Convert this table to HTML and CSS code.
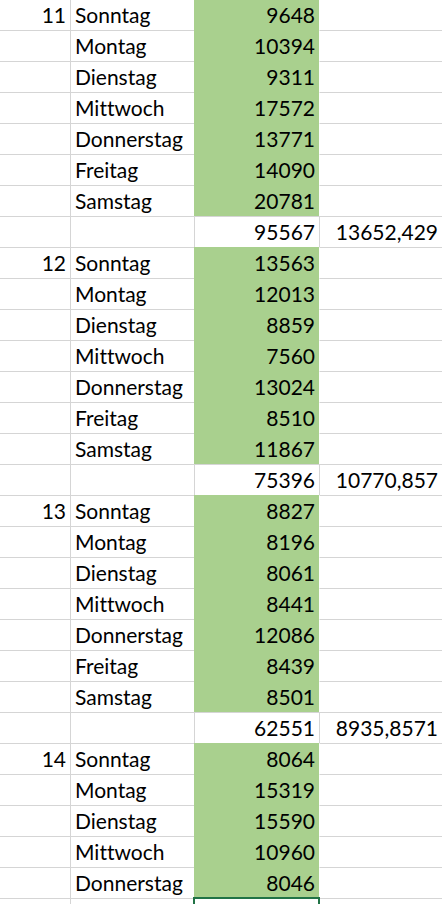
FILE: index.html
```html
<!DOCTYPE html>
<html lang="de">
<head>
<meta charset="utf-8">
<title>Tabelle</title>
<link rel="stylesheet" href="styles.css">
</head>
<body>
<div class="sheet">
  <div class="grid">
    <div class="row day"><div class="cell a">11</div><div class="cell b">Sonntag</div><div class="cell c">9648</div><div class="cell d"></div></div>
    <div class="row day"><div class="cell a"></div><div class="cell b">Montag</div><div class="cell c">10394</div><div class="cell d"></div></div>
    <div class="row day"><div class="cell a"></div><div class="cell b">Dienstag</div><div class="cell c">9311</div><div class="cell d"></div></div>
    <div class="row day"><div class="cell a"></div><div class="cell b">Mittwoch</div><div class="cell c">17572</div><div class="cell d"></div></div>
    <div class="row day"><div class="cell a"></div><div class="cell b">Donnerstag</div><div class="cell c">13771</div><div class="cell d"></div></div>
    <div class="row day"><div class="cell a"></div><div class="cell b">Freitag</div><div class="cell c">14090</div><div class="cell d"></div></div>
    <div class="row day"><div class="cell a"></div><div class="cell b">Samstag</div><div class="cell c">20781</div><div class="cell d"></div></div>
    <div class="row total"><div class="cell a"></div><div class="cell b"></div><div class="cell c">95567</div><div class="cell d">13652,429</div></div>

    <div class="row day"><div class="cell a">12</div><div class="cell b">Sonntag</div><div class="cell c">13563</div><div class="cell d"></div></div>
    <div class="row day"><div class="cell a"></div><div class="cell b">Montag</div><div class="cell c">12013</div><div class="cell d"></div></div>
    <div class="row day"><div class="cell a"></div><div class="cell b">Dienstag</div><div class="cell c">8859</div><div class="cell d"></div></div>
    <div class="row day"><div class="cell a"></div><div class="cell b">Mittwoch</div><div class="cell c">7560</div><div class="cell d"></div></div>
    <div class="row day"><div class="cell a"></div><div class="cell b">Donnerstag</div><div class="cell c">13024</div><div class="cell d"></div></div>
    <div class="row day"><div class="cell a"></div><div class="cell b">Freitag</div><div class="cell c">8510</div><div class="cell d"></div></div>
    <div class="row day"><div class="cell a"></div><div class="cell b">Samstag</div><div class="cell c">11867</div><div class="cell d"></div></div>
    <div class="row total"><div class="cell a"></div><div class="cell b"></div><div class="cell c">75396</div><div class="cell d">10770,857</div></div>

    <div class="row day"><div class="cell a">13</div><div class="cell b">Sonntag</div><div class="cell c">8827</div><div class="cell d"></div></div>
    <div class="row day"><div class="cell a"></div><div class="cell b">Montag</div><div class="cell c">8196</div><div class="cell d"></div></div>
    <div class="row day"><div class="cell a"></div><div class="cell b">Dienstag</div><div class="cell c">8061</div><div class="cell d"></div></div>
    <div class="row day"><div class="cell a"></div><div class="cell b">Mittwoch</div><div class="cell c">8441</div><div class="cell d"></div></div>
    <div class="row day"><div class="cell a"></div><div class="cell b">Donnerstag</div><div class="cell c">12086</div><div class="cell d"></div></div>
    <div class="row day"><div class="cell a"></div><div class="cell b">Freitag</div><div class="cell c">8439</div><div class="cell d"></div></div>
    <div class="row day"><div class="cell a"></div><div class="cell b">Samstag</div><div class="cell c">8501</div><div class="cell d"></div></div>
    <div class="row total"><div class="cell a"></div><div class="cell b"></div><div class="cell c">62551</div><div class="cell d">8935,8571</div></div>

    <div class="row day"><div class="cell a">14</div><div class="cell b">Sonntag</div><div class="cell c">8064</div><div class="cell d"></div></div>
    <div class="row day"><div class="cell a"></div><div class="cell b">Montag</div><div class="cell c">15319</div><div class="cell d"></div></div>
    <div class="row day"><div class="cell a"></div><div class="cell b">Dienstag</div><div class="cell c">15590</div><div class="cell d"></div></div>
    <div class="row day"><div class="cell a"></div><div class="cell b">Mittwoch</div><div class="cell c">10960</div><div class="cell d"></div></div>
    <div class="row day"><div class="cell a"></div><div class="cell b">Donnerstag</div><div class="cell c">8046</div><div class="cell d"></div></div>
    <div class="row"><div class="cell a"></div><div class="cell b"></div><div class="cell c sel"></div><div class="cell d"></div></div>
  </div>
</div>
</body>
</html>
```
FILE: styles.css
```css
html, body {
  margin: 0;
  padding: 0;
  background: #ffffff;
}

.sheet {
  height: 904px;
  overflow: hidden;
  font-family: Lato, "Liberation Sans", sans-serif;
  font-size: 21px;
  font-variant-ligatures: none;
  color: #000000;
}

.grid {
  margin-top: -1px;
}

.row {
  display: grid;
  grid-template-columns: 70px 124px 125px 1fr;
  height: 31px;
}

.cell {
  box-sizing: border-box;
  height: 31px;
  border-top: 1px solid #d5d5d5;
  line-height: 30px;
  white-space: nowrap;
  overflow: hidden;
}

.b, .c, .d {
  border-left: 1px solid #d5d5d5;
}

.a {
  text-align: right;
  padding-right: 4px;
}

.b {
  padding-left: 4px;
}

.c, .d {
  text-align: right;
  padding-right: 4px;
}

.day .c {
  background: #a9d08e;
  border-color: #a9d08e;
}

.day .d {
  border-left-color: #ffffff;
}

.sel {
  position: relative;
  overflow: visible;
}

.sel::after {
  content: "";
  position: absolute;
  left: -2px;
  right: -1px;
  top: -2px;
  height: 30px;
  border: 2px solid #217346;
}
```
